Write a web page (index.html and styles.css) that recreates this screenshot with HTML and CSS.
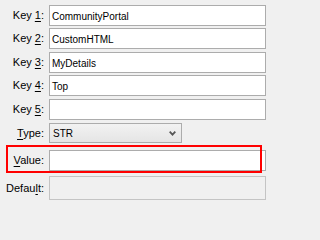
FILE: index.html
```html
<!DOCTYPE html>
<html>
<head>
<meta charset="utf-8">
<link rel="stylesheet" href="styles.css">
</head>
<body>
<div class="form">
  <div class="row">
    <span class="lbl">Key <u>1</u>:</span>
    <div class="field">CommunityPortal</div>
  </div>
  <div class="row gap2">
    <span class="lbl">Key <u>2</u>:</span>
    <div class="field">CustomHTML</div>
  </div>
  <div class="row gap3">
    <span class="lbl">Key <u>3</u>:</span>
    <div class="field">MyDetails</div>
  </div>
  <div class="row gap2">
    <span class="lbl">Key <u>4</u>:</span>
    <div class="field">Top</div>
  </div>
  <div class="row gap3">
    <span class="lbl">Key <u>5</u>:</span>
    <div class="field"></div>
  </div>
  <div class="row gap3 short">
    <span class="lbl"><u>T</u>ype:</span>
    <div class="select">
      <span>STR</span>
      <svg class="chev" width="7" height="5" viewBox="0 0 7 5"><polyline points="0.7,0.7 3.5,3.6 6.3,0.7" fill="none" stroke="#555" stroke-width="1.8"/></svg>
    </div>
  </div>
  <div class="row gap7 value-row">
    <span class="lbl"><u>V</u>alue:</span>
    <div class="field"></div>
    <div class="highlight"></div>
  </div>
  <div class="row gap5 tall">
    <span class="lbl">Defau<u>l</u>t:</span>
    <div class="field disabled"></div>
  </div>
</div>
</body>
</html>
```

FILE: styles.css
```css
html, body {
  margin: 0;
  padding: 0;
  background: #f0f0f0;
}
body {
  width: 266px;
  height: 202px;
  overflow: hidden;
  font-family: "Liberation Sans", Arial, sans-serif;
  color: #000;
}
.form {
  padding-top: 5px;
  display: flex;
  flex-direction: column;
}
.row {
  display: flex;
  align-items: center;
  height: 21px;
}
.row.short { height: 20px; }
.row.tall { height: 24px; }
.gap2 { margin-top: 2px; }
.gap3 { margin-top: 3px; }
.gap5 { margin-top: 5px; }
.gap7 { margin-top: 7px; }
.lbl {
  width: 44px;
  padding-right: 5px;
  text-align: right;
  font-size: 11px;
  line-height: 13px;
  white-space: nowrap;
}
.lbl u {
  text-decoration-thickness: 1px;
  text-underline-offset: 2px;
}
.field {
  flex: 1;
  height: 100%;
  box-sizing: border-box;
  border: 1px solid #acacac;
  background: #fff;
  font-size: 10px;
  line-height: 19px;
  padding: 1px 0 0 2px;
  white-space: nowrap;
  overflow: hidden;
}
.field.disabled {
  background: #f0f0f0;
  border-color: #c4c4c4;
}
.select {
  width: 133px;
  height: 100%;
  box-sizing: border-box;
  border: 1px solid #acacac;
  background: linear-gradient(#f2f2f2, #e5e5e5);
  display: flex;
  align-items: center;
  justify-content: space-between;
  padding: 0 5px 0 3px;
  font-size: 10px;
}
.chev { display: block; margin-top: 1px; }
.value-row { position: relative; }
.highlight {
  position: absolute;
  left: 6px;
  top: -5px;
  width: 256px;
  height: 28px;
  box-sizing: border-box;
  border: 2px solid #ff0000;
  pointer-events: none;
}
```
